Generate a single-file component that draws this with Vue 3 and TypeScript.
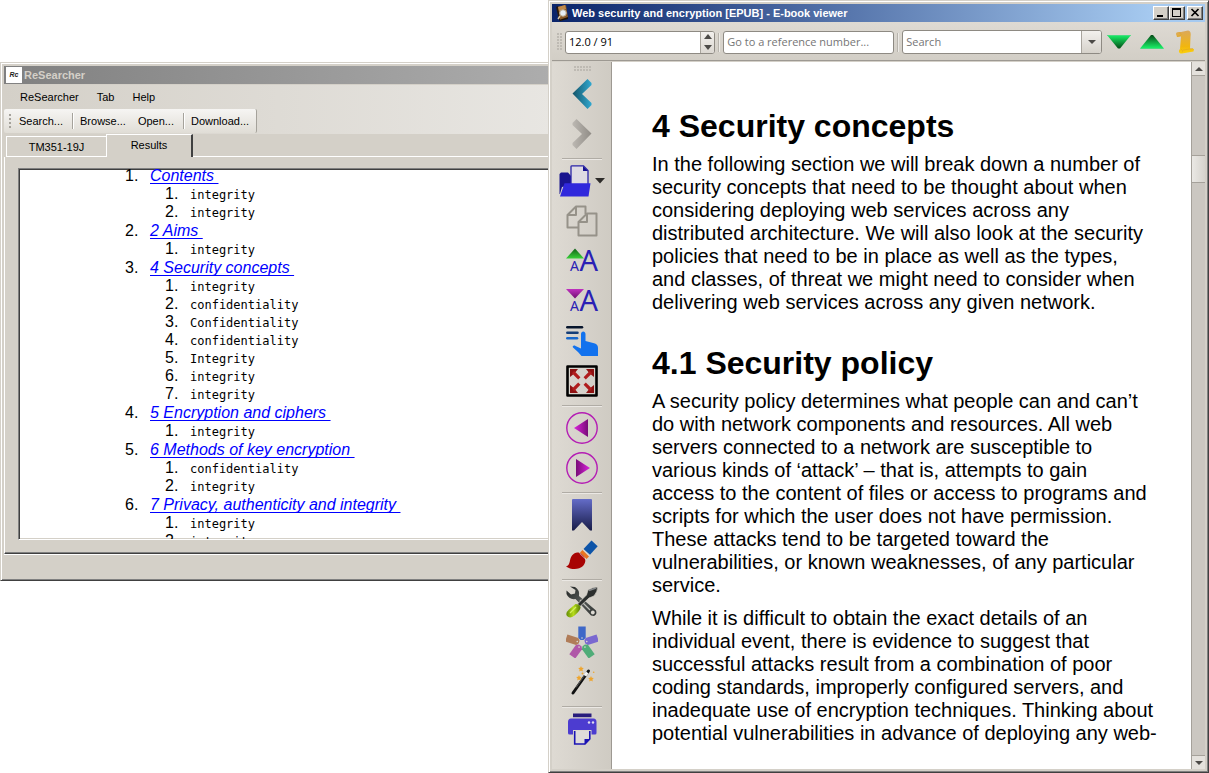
<script setup lang="ts">
interface Section {
  title: string
  hits: string[]
}

const menus: string[] = ['ReSearcher', 'Tab', 'Help']

const sections: Section[] = [
  { title: 'Contents', hits: ['integrity', 'integrity'] },
  { title: '2 Aims', hits: ['integrity'] },
  {
    title: '4 Security concepts',
    hits: ['integrity', 'confidentiality', 'Confidentiality', 'confidentiality', 'Integrity', 'integrity', 'integrity'],
  },
  { title: '5 Encryption and ciphers', hits: ['integrity'] },
  { title: '6 Methods of key encryption', hits: ['confidentiality', 'integrity'] },
  { title: '7 Privacy, authenticity and integrity', hits: ['integrity', 'integrity'] },
]

const swatches: { color: string; angle: number }[] = [
  { color: '#3f68c8', angle: 0 },
  { color: '#7a68d0', angle: 72 },
  { color: '#50ac78', angle: 144 },
  { color: '#b058a8', angle: 216 },
  { color: '#b07c58', angle: 288 },
]
</script>

<template>
  <div class="desktop">
    <section class="window researcher" aria-label="ReSearcher">
      <header class="titlebar inactive">
        <span class="app-logo">Rc</span>
        <span class="title">ReSearcher</span>
      </header>
      <div class="strips">
        <nav class="menubar">
          <button v-for="m in menus" :key="m" type="button" class="menu">{{ m }}</button>
        </nav>
        <div class="toolstrip">
          <span class="strip-grip"></span>
          <button type="button" class="tool">Search...</button>
          <span class="strip-sep"></span>
          <button type="button" class="tool">Browse...</button>
          <button type="button" class="tool open">Open...</button>
          <span class="strip-sep"></span>
          <button type="button" class="tool">Download...</button>
        </div>
      </div>
      <div class="tabs" role="tablist">
        <button type="button" role="tab" aria-selected="false" class="tab">TM351-19J</button>
        <button type="button" role="tab" aria-selected="true" class="tab selected">Results</button>
        <span class="tab-rest"></span>
      </div>
      <div class="tab-page">
        <div class="results">
          <ol class="sections">
            <li v-for="(s, i) in sections" :key="s.title">
              <div class="row head"><span class="num">{{ i + 1 }}.</span><a href="#">{{ s.title + ' ' }}</a></div>
              <ol class="hits">
                <li v-for="(h, j) in s.hits" :key="j" class="row hit">
                  <span class="num">{{ j + 1 }}.</span><code>{{ h }}</code>
                </li>
              </ol>
            </li>
          </ol>
        </div>
      </div>
      <footer class="status"></footer>
    </section>

    <section class="window viewer" aria-label="E-book viewer">
      <header class="titlebar active">
        <svg class="book-logo" width="16" height="16" viewBox="0 0 16 16">
          <path d="M3 2 12 0 14 13 6 16Z" fill="#8a5a26" />
          <path d="M2 2 4 1 6 15 5 15Z" fill="#2a1a0c" />
          <path d="M5 15 14 12 14 14 6 16Z" fill="#17100a" />
          <path d="M4 2 11 0 12 4 5 6Z" fill="#c08a4a" />
          <circle cx="9" cy="8" r="3.3" fill="#e6eef4" stroke="#b9a88c" />
          <path d="m6 11-2 3" stroke="#d8c8a8" stroke-width="1.5" />
        </svg>
        <span class="title">Web security and encryption [EPUB] - E-book viewer</span>
        <span class="caption-buttons">
          <button type="button" aria-label="Minimize">
            <svg width="14" height="12" viewBox="0 0 14 12"><path d="M3 8h6v2H3z" /></svg>
          </button>
          <button type="button" aria-label="Maximize">
            <svg width="14" height="12" viewBox="0 0 14 12"><path fill-rule="evenodd" d="M2 1h9v9H2zM3 3v6h7V3z" /></svg>
          </button>
          <button type="button" aria-label="Close" class="close">
            <svg width="14" height="12" viewBox="0 0 14 12"><path d="m3.500 2 7 7m0-7-7 7" stroke="#000" stroke-width="1.700" /></svg>
          </button>
        </span>
      </header>

      <div class="topbar">
        <span class="grip vertical"></span>
        <div class="field spin">
          <input type="text" value="12.0 / 91" aria-label="Position" />
          <span class="steppers">
            <button type="button" aria-label="Increase"><svg width="8" height="5"><path d="M0 5 4 0 8 5Z" fill="#4c4a47" /></svg></button>
            <button type="button" aria-label="Decrease"><svg width="8" height="5"><path d="M0 0 4 5 8 0Z" fill="#4c4a47" /></svg></button>
          </span>
        </div>
        <span class="bar-sep"></span>
        <div class="field reference">
          <input type="text" placeholder="Go to a reference number..." aria-label="Reference number" />
        </div>
        <span class="bar-sep"></span>
        <div class="field search">
          <input type="text" placeholder="Search" aria-label="Search" />
          <button type="button" class="drop" aria-label="Search history"><svg width="8" height="4"><path d="M0 0 4 4 8 0Z" fill="#4c4a47" /></svg></button>
        </div>
        <button type="button" class="bar-button" aria-label="Find next">
          <svg width="24" height="24" viewBox="0 0 24 24">
            <defs><linearGradient id="gDown" x2="0" y2="1"><stop stop-color="#18f468" /><stop offset="1" stop-color="#064c18" /></linearGradient></defs>
            <path d="M0 5H24L13 18.500H11Z" fill="url(#gDown)" /><path d="M.5 5.500h23" stroke="#48dc80" />
          </svg>
        </button>
        <button type="button" class="bar-button" aria-label="Find previous">
          <svg width="24" height="24" viewBox="0 0 24 24">
            <defs><linearGradient id="gUp" x2="0" y2="1"><stop stop-color="#064c18" /><stop offset="1" stop-color="#18f468" /></linearGradient></defs>
            <path d="M0 18.500H24L13 5H11Z" fill="url(#gUp)" /><path d="M.5 18.500h23" stroke="#48dc80" />
          </svg>
        </button>
        <button type="button" class="bar-button" aria-label="Table of contents">
          <svg width="24" height="24" viewBox="0 0 24 24">
            <defs><linearGradient id="gScroll" x2="0" y2="1"><stop stop-color="#dba85a" /><stop offset=".7" stop-color="#f2b60e" /><stop offset="1" stop-color="#fcd20a" /></linearGradient></defs>
            <path d="M3 4C3 2 5 2 8 2L15 .5C18 1 18 4 17.500 7L17 18.500 21 19 20.500 21.500 9 23.500C6 24 5 21 7 19L8 6.500 4 7Z" fill="url(#gScroll)" />
            <path d="M4 6.500 7.500 5.500C9 4 8 3 6 3M8 19.500c2 0 2 2 1 3M10 20l10-1.500" fill="none" stroke="#dca428" stroke-width=".6" />
          </svg>
        </button>
      </div>

      <div class="main">
        <div class="sidebar">
          <span class="grip horizontal"></span>
          <button type="button" aria-label="Back">
            <svg width="32" height="32" viewBox="0 0 32 32">
              <defs><linearGradient id="gBack"><stop stop-color="#145468" /><stop offset="1" stop-color="#30a8d0" /></linearGradient></defs>
              <path d="M6.500 15.500 21.500 1 25.500 5V7L16 16 25.500 25V27L21.500 31Z" fill="url(#gBack)" />
            </svg>
          </button>
          <button type="button" aria-label="Forward">
            <svg width="32" height="32" viewBox="0 0 32 32">
              <defs><linearGradient id="gFwd"><stop stop-color="#bcb8b2" /><stop offset="1" stop-color="#908c86" /></linearGradient></defs>
              <path d="M25.500 15.500 10.500 1 6.500 5V7L16 16 6.500 25V27L10.500 31Z" fill="url(#gFwd)" />
            </svg>
          </button>
          <hr />
          <button type="button" aria-label="Open book" class="open-book">
            <svg width="32" height="32" viewBox="0 0 32 32">
              <path d="M.5 9 2 7.500H9L12 11V20L3 22 1 29H.5Z" fill="#19148e" />
              <path d="M12 19V1.500Q12 .8 13 .8H24.500L29 5.500V19" fill="#dedbe3" stroke="#2a24a8" stroke-width="1.300" />
              <path d="M24 1V6H29Z" fill="#17128f" />
              <path d="M5.500 18.300H31.500L29.500 31.500H1Z" fill="#3028dc" />
            </svg>
            <svg width="10" height="6"><path d="M0 0H10L5 5.500Z" fill="#2d2b29" /></svg>
          </button>
          <button type="button" aria-label="Copy">
            <svg width="32" height="32" viewBox="0 0 32 32" fill="none" stroke="#969289" stroke-width="2" stroke-linejoin="round">
              <path d="M12.500 22.500H1.500V10L10 1.500H19.500V9M10 1.500V10H1.500" />
              <path d="M12.500 17 21 8.500H30.500V30.500H12.500ZM21 8.500V17H12.500" />
            </svg>
          </button>
          <button type="button" aria-label="Increase font size">
            <svg width="32" height="32" viewBox="0 0 32 32" class="letters">
              <defs><linearGradient id="gTriUp" x2="0" y2="1"><stop stop-color="#126018" /><stop offset="1" stop-color="#38d038" /></linearGradient></defs>
              <path d="M0 13.500 9 3.500 18 13.500Z" fill="url(#gTriUp)" />
              <text x="4" y="26" font-size="14">A</text><text x="13.500" y="26" font-size="29">A</text>
            </svg>
          </button>
          <button type="button" aria-label="Decrease font size">
            <svg width="32" height="32" viewBox="0 0 32 32" class="letters">
              <defs><linearGradient id="gTriDown" x2="0" y2="1"><stop stop-color="#c030c0" /><stop offset="1" stop-color="#701070" /></linearGradient></defs>
              <path d="M0 4H18L9 13.500Z" fill="url(#gTriDown)" />
              <text x="4" y="26" font-size="14">A</text><text x="13.500" y="26" font-size="29">A</text>
            </svg>
          </button>
          <button type="button" aria-label="Scroll mode">
            <svg width="32" height="32" viewBox="0 0 32 32" stroke-linecap="round" stroke-width="2.500">
              <path d="M1.300 2.300H16" stroke="#07152c" /><path d="M1.300 7.800H11.500" stroke="#153e78" /><path d="M1.300 13.300H11" stroke="#1868cc" />
              <path d="M15 9C15 5.500 19.500 5.500 19.500 9V16L29 18.500Q32 19.500 32 23V31H15.500L12 27 7 22.500C6 21 8 20 9.500 21L15 23.500Z" fill="#1272ee" />
            </svg>
          </button>
          <button type="button" aria-label="Full screen">
            <svg width="32" height="32" viewBox="0 0 32 32">
              <rect x="1.500" y="1.500" width="29" height="29" fill="none" stroke="#000" stroke-width="2.600" stroke-linejoin="round" />
              <g v-for="a in [0, 90, 180, 270]" :key="a" :transform="`rotate(${a} 16 16)`">
                <path d="M4 4H12L10 6.500 6.500 10 4 12Z" fill="#8e1212" />
                <path d="m7 7 6.300 6.300" stroke="#b01c1c" stroke-width="3.200" />
              </g>
            </svg>
          </button>
          <hr />
          <button type="button" aria-label="Previous page">
            <svg width="32" height="32" viewBox="0 0 32 32">
              <defs><linearGradient id="gPrev"><stop stop-color="#dc24dc" /><stop offset="1" stop-color="#780c78" /></linearGradient></defs>
              <circle cx="16" cy="16" r="15.200" fill="none" stroke="#b41cb4" stroke-width="1.400" />
              <path d="M8 16 22 7V25Z" fill="url(#gPrev)" />
            </svg>
          </button>
          <button type="button" aria-label="Next page">
            <svg width="32" height="32" viewBox="0 0 32 32">
              <defs><linearGradient id="gNext"><stop stop-color="#780c78" /><stop offset="1" stop-color="#dc24dc" /></linearGradient></defs>
              <circle cx="16" cy="16" r="15.200" fill="none" stroke="#b41cb4" stroke-width="1.400" />
              <path d="M24 16 10 7V25Z" fill="url(#gNext)" />
            </svg>
          </button>
          <hr />
          <button type="button" aria-label="Bookmarks">
            <svg width="32" height="32" viewBox="0 0 32 32">
              <defs><linearGradient id="gMark" x2="0" y2="1"><stop stop-color="#646cc8" /><stop offset="1" stop-color="#181c48" /></linearGradient></defs>
              <path d="M6 1Q6 0 7 0H25Q26 0 26 1V31.500H24L16 23 8 31.500H6Z" fill="url(#gMark)" />
            </svg>
          </button>
          <button type="button" aria-label="Highlights">
            <svg width="32" height="32" viewBox="0 0 32 32">
              <path d="M25.500 1.500 31.700 7.300 24 15.800 17.500 10Z" fill="#0d54a8" />
              <path d="M16.500 11 23 17.500 20.500 20 14 13.500Z" fill="#e87420" />
              <path d="M0 27.500C5 26 3 20 6 16.500 9 13 12.500 12.500 16 15.500 20 18.500 20.500 23 17 27 13 31 5 31 0 27.500Z" fill="#a80404" />
              <path d="m13.500 14.200 6.500 6.300M17 10.500l6.500 6.200" stroke="#ded8cf" stroke-width=".8" />
            </svg>
          </button>
          <hr />
          <button type="button" aria-label="Preferences">
            <svg width="32" height="32" viewBox="0 0 32 32">
              <defs>
                <linearGradient id="gWrench" x2="1" y2="1"><stop stop-color="#202322" /><stop offset=".5" stop-color="#555957" /><stop offset="1" stop-color="#303332" /></linearGradient>
                <linearGradient id="gHandle" x2="1"><stop stop-color="#648c04" /><stop offset=".5" stop-color="#b6dc1c" /><stop offset="1" stop-color="#567c04" /></linearGradient>
              </defs>
              <path d="M4 .5 9 1Q14 4 13 10L30 24.500Q31.500 28 28 30L25 29.500 9.500 13Q3 14 .5 8V4.500L5 8.500 9 7.500 9.500 4Z" fill="url(#gWrench)" />
              <path d="m14 14 10 10" stroke="#bfc0bb" stroke-width="1.200" /><circle cx="26.800" cy="26.500" r="1.900" fill="#dedbd4" />
              <path d="M31.500 1Q32 5 28 10L23 12 14 20.500 11.500 18 20.500 9 22 4Q27 1 31.500 1Z" fill="#2c2f2e" stroke="#d8d4cc" stroke-width=".7" />
              <path d="m23 4.500 7-2.500" stroke="#85888a" stroke-width="1.500" />
              <path d="M9.500 18Q13 18 14.500 21 15 24 8.500 29.500 4 33 1 30-1 27 3 23.500Z" fill="url(#gHandle)" />
              <path d="m4 27 6-6" stroke="#d4f05c" stroke-width="1.200" />
            </svg>
          </button>
          <button type="button" aria-label="Color scheme">
            <svg width="32" height="32" viewBox="0 0 32 32">
              <g v-for="s in swatches" :key="s.angle" :transform="`rotate(${s.angle} 16 17)`">
                <path d="M12.300 .5H19.700V12L17.500 14H14.500L12.300 12Z" :fill="s.color" />
                <circle cx="16" cy="12" r=".8" fill="#ddd9d2" />
              </g>
            </svg>
          </button>
          <button type="button" aria-label="Toggle toolbars">
            <svg width="32" height="32" viewBox="0 0 32 32">
              <path d="M7 27 22.500 5" stroke="#111" stroke-width="3" stroke-linecap="round" />
              <path d="M10 21.500 19 8.700" stroke="#777" stroke-width=".7" />
              <path d="m19 9.700 2.300-3.200" stroke="#f4f4f4" stroke-width="3" />
              <path d="m15 0 .8 1.800 2 .2-1.400 1.400.4 2L15 4.500l-1.800.9.400-2L12.200 2l2-.2Z" fill="#eea52e" />
              <path d="m13 9 .8 1.800 2 .2-1.400 1.400.4 2-1.800-.9-1.800.9.400-2L10.200 11l2-.2Z" fill="#eea52e" />
              <path d="m25 10 .8 1.800 2 .2-1.400 1.400.4 2-1.800-.9-1.800.9.400-2-1.400-1.400 2-.2Z" fill="#eea52e" />
              <circle cx="16.500" cy="7.500" r="1" fill="#eea52e" /><circle cx="27.700" cy="6.200" r=".8" fill="#eea52e" />
            </svg>
          </button>
          <hr />
          <button type="button" aria-label="Print">
            <svg width="32" height="32" viewBox="0 0 32 32">
              <path d="M7 .5H25.500V4.200H7Z" fill="#281c7c" />
              <path d="M5 5.500H27.500Q30.500 5.500 30.500 9V20Q30.500 21.500 29 21.500H3.500Q2 21.500 2 20V9Q2 5.500 5 5.500Z" fill="#4c3cd0" />
              <circle cx="23" cy="9.500" r="1.200" fill="#dedaf0" /><circle cx="27" cy="9.500" r="1.200" fill="#dedaf0" />
              <path d="M7 17H25.500V25H7Z" fill="#dcd8d0" />
              <path d="M8.700 18V31H19L23.800 26V18" fill="#dfdcda" stroke="#1c14b4" stroke-width="1.600" />
              <path d="M18.500 31.500V26H24Z" fill="#1c14b4" />
            </svg>
          </button>
        </div>

        <article class="page">
          <h1>4 Security concepts</h1>
          <p>In the following section we will break down a number of security concepts that need to be thought about when considering deploying web services across any distributed architecture. We will also look at the security policies that need to be in place as well as the types,<br />and classes, of threat we might need to consider when delivering web services across any given network.</p>
          <h1>4.1 Security policy</h1>
          <p>A security policy determines what people can and can’t do with network components and resources. All web servers connected to a network are susceptible to various kinds of ‘attack’ – that is, attempts to gain<br />access to the content of files or access to programs and scripts for which the user does not have permission. These attacks tend to be targeted toward the vulnerabilities, or known weaknesses, of any particular service.</p>
          <p>While it is difficult to obtain the exact details of an individual event, there is evidence to suggest that successful attacks result from a combination of poor coding standards, improperly configured servers, and inadequate use of encryption techniques. Thinking about potential vulnerabilities in advance of deploying any web-</p>
        </article>

        <div class="scrollbar">
          <button type="button" aria-label="Scroll up"><svg width="8" height="4"><path d="M0 4 4 0 8 4Z" fill="#4c4a47" /></svg></button>
          <div class="track"><div class="thumb"></div></div>
          <button type="button" aria-label="Scroll down"><svg width="8" height="4"><path d="M0 0 4 4 8 0Z" fill="#4c4a47" /></svg></button>
        </div>
      </div>
    </section>
  </div>
</template>

<style>
body {
  margin: 0;
  background: #fff;
}
</style>

<style scoped>
.desktop, .desktop * {
  box-sizing: border-box;
}
.desktop {
  position: relative;
  height: 100vh;
  overflow: hidden;
  font: 11px/14px "Liberation Sans", Arial, sans-serif;
  color: #000;
}
button {
  margin: 0;
  padding: 0;
  border: 0;
  background: none;
  font: inherit;
  color: inherit;
}
svg {
  display: block;
  flex: none;
}
.window {
  position: absolute;
  display: flex;
  flex-direction: column;
  background: #d4d0c8;
  border: 1px solid #d4d0c8;
  border-right-color: #404040;
  border-bottom-color: #404040;
  box-shadow: inset 1px 1px #fff, inset -1px -1px #808080;
  padding: 3px;
}
.researcher {
  left: 0;
  top: 62px;
  width: 740px;
  height: 519px;
}
.viewer {
  left: 548px;
  right: 0;
  top: 0;
  bottom: 0;
}
.titlebar {
  flex: none;
  display: flex;
  align-items: center;
  height: 18px;
  padding: 0 2px;
  font-weight: bold;
}
.title {
  flex: 1;
  white-space: nowrap;
}
.inactive {
  background: linear-gradient(90deg, #808080, #bcbcbc);
  color: #d4d0c8;
}
.active {
  background: linear-gradient(90deg, #0a246a, #a6caf0 92%);
  color: #fff;
}
.app-logo {
  width: 16px;
  height: 16px;
  margin-right: 2px;
  background: #fff;
  color: #222;
  font-size: 7px;
  line-height: 16px;
  font-style: italic;
  text-align: center;
}
.book-logo {
  margin-right: 2px;
}
.caption-buttons {
  display: flex;
}
.caption-buttons button {
  width: 16px;
  height: 14px;
  background: #d4d0c8;
  border: 1px solid #fff;
  border-right-color: #404040;
  border-bottom-color: #404040;
  box-shadow: inset -1px -1px #808080;
}
.caption-buttons .close {
  margin-left: 2px;
}

/* ReSearcher */
.strips {
  flex: none;
  margin-top: 1px;
  height: 49px;
  background: linear-gradient(90deg, #d4d0c8, #e8e6e2 75%);
}
.menubar {
  display: flex;
  gap: 18px;
  height: 24px;
  padding-left: 16px;
}
.toolstrip {
  display: flex;
  align-items: center;
  width: 253px;
  height: 24px;
  padding-left: 5px;
  background: linear-gradient(#f6f5f3, #e0ddd6);
  border-right: 1px solid #a5a29b;
  border-radius: 2px;
}
.strip-grip {
  width: 2px;
  height: 14px;
  margin-right: 8px;
  background: repeating-linear-gradient(#a5a29b 0 2px, transparent 2px 4px);
}
.strip-sep {
  width: 2px;
  height: 16px;
  margin: 0 6px 0 9px;
  background: linear-gradient(90deg, #a5a29b 50%, #fff 50%);
}
.tool.open {
  margin-left: 12px;
}
.tabs {
  flex: none;
  display: flex;
  align-items: flex-end;
  height: 23px;
}
.tab {
  width: 100px;
  height: 21px;
  margin-left: 2px;
  border: solid #fff;
  border-width: 1px 0 1px 1px;
}
.tab.selected {
  width: 87px;
  height: 23px;
  margin-left: 0;
  border-width: 1px 2px 0 1px;
  border-right-color: #404040;
  padding-bottom: 2px;
}
.tab-rest {
  flex: 1;
  border-bottom: 1px solid #fff;
}
.tab-page {
  flex: 1;
  min-height: 0;
  display: flex;
  padding: 11px 14px 13px 13px;
  border-left: 1px solid #fff;
  border-bottom: 1px solid #404040;
  box-shadow: inset 0 -1px #808080;
}
.results {
  flex: 1;
  overflow: hidden;
  background: #fff;
  border: 1px solid #808080;
  border-bottom-color: #fff;
  box-shadow: inset 1px 1px #404040, inset 0 -1px #d4d0c8;
  padding: 1px;
}
ol {
  list-style: none;
  margin: 0;
  padding: 0;
}
.sections {
  margin: -4px 0 0 105px;
  font-size: 16px;
}
.hits {
  margin-left: 40px;
}
.row {
  display: flex;
  align-items: baseline;
  height: 18px;
  line-height: 18px;
}
.head {
  height: 19px;
  line-height: 19px;
}
.num {
  width: 25px;
}
.head a {
  color: #00f;
  font-style: italic;
  white-space: pre;
  text-decoration: underline;
  text-decoration-skip-ink: none;
  text-decoration-thickness: 1px;
  text-underline-offset: 2px;
}
code {
  font: 12px/18px "DejaVu Sans Mono", monospace;
}
.status {
  flex: none;
  height: 23px;
  border-top: 1px solid #fff;
}

/* E-book viewer */
.topbar {
  flex: none;
  display: flex;
  align-items: center;
  height: 39px;
  margin-bottom: 1px;
  padding: 2px 4px 0 5px;
  background: linear-gradient(#dedad3, #d2cec6);
  border-bottom: 1px solid #9d9992;
}
.grip {
  flex: none;
  background-image: radial-gradient(circle at 1px 1px, #bebab3 1px, transparent 1px);
}
.grip.vertical {
  width: 5px;
  height: 18px;
  margin-right: 3px;
  background-size: 3px 3px;
}
.grip.horizontal {
  width: 17px;
  height: 6px;
  margin: 4px 0 2px;
  background-size: 3px 3px;
}
.field {
  display: flex;
  min-width: 0;
  height: 23px;
  overflow: hidden;
  background: #fff;
  border: 1px solid #8e8a83;
  border-radius: 3px;
  font: 11px/16px "Open Sans", "Noto Sans", sans-serif;
}
.field input {
  flex: 1;
  min-width: 0;
  margin: 0;
  padding: 0 3px;
  border: 0;
  background: none;
  outline: 0;
  font: inherit;
  color: #000;
}
.field input::placeholder {
  color: #757575;
  opacity: 1;
}
.spin {
  flex: 150 1 0;
}
.reference {
  flex: 171 1 0;
}
.search {
  flex: 200 1 0;
  height: 24px;
}
.steppers {
  display: flex;
  flex-direction: column;
  width: 14px;
  background: linear-gradient(#f2f0ed, #dcd8d2);
  border-left: 1px solid #a8a49d;
}
.steppers button, .drop {
  flex: 1;
  display: flex;
  align-items: center;
  justify-content: center;
}
.field .drop {
  flex: none;
  width: 20px;
  background: linear-gradient(#f2f0ed, #d6d2cb);
  border-left: 1px solid #a8a49d;
}
.bar-sep {
  flex: none;
  width: 2px;
  height: 19px;
  margin: 0 3px;
  background: linear-gradient(90deg, #b8b4ad 50%, #eceae6 50%);
}
.bar-button {
  flex: none;
  width: 33px;
  display: flex;
  justify-content: center;
}
.main {
  flex: 1;
  min-height: 0;
  display: flex;
}
.sidebar {
  flex: none;
  display: flex;
  flex-direction: column;
  align-items: center;
  width: 60px;
  padding-left: 1px;
  background: linear-gradient(90deg, #dedad3, #cfcbc3);
  border-right: 1px solid #9d9992;
}
.sidebar button {
  flex: none;
  height: 40px;
  display: flex;
  align-items: center;
  gap: 4px;
}
.sidebar hr {
  flex: none;
  width: 40px;
  height: 2px;
  margin: 4px 0 1px;
  border: 0;
  background: linear-gradient(#b0aca5 50%, #ebe8e4 50%);
}
.letters {
  overflow: visible;
}
.letters text {
  font-family: "Noto Sans", sans-serif;
  fill: #2a20b4;
}
.page {
  flex: 1;
  min-width: 0;
  overflow: hidden;
  background: #fff;
  padding: 46px 32px 0 40px;
  font-size: 20px;
  line-height: 23px;
}
.page h1 {
  margin: 0 0 8px;
  font-size: 32px;
  line-height: 37px;
}
.page p {
  margin: 0 0 10px;
}
.page p + h1 {
  margin-top: 31px;
}
.scrollbar {
  flex: none;
  display: flex;
  flex-direction: column;
  width: 14px;
  background: #cbc7c1;
  border-left: 1px solid #a5a19a;
}
.scrollbar button {
  flex: none;
  display: flex;
  align-items: center;
  justify-content: center;
  height: 14px;
  background: #e4e1dc;
}
.scrollbar button:first-child {
  border-bottom: 1px solid #a5a19a;
}
.scrollbar button:last-child {
  border-top: 1px solid #a5a19a;
}
.track {
  flex: 1;
  padding-top: 79px;
}
.thumb {
  height: 28px;
  background: linear-gradient(90deg, #eae8e4, #d6d3cd);
  border: solid #a5a19a;
  border-width: 1px 0;
}
</style>
